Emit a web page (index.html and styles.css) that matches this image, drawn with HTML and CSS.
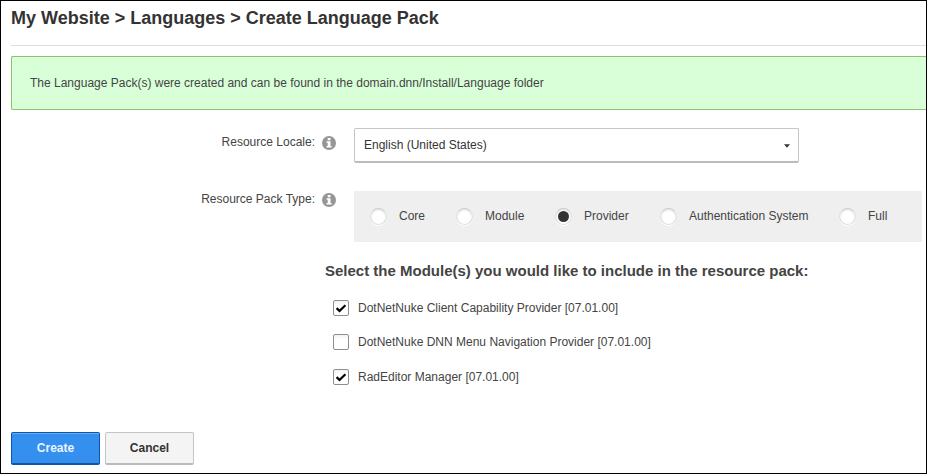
FILE: index.html
```html
<!DOCTYPE html>
<html lang="en">
<head>
<meta charset="utf-8">
<title>Create Language Pack</title>
<link rel="stylesheet" href="styles.css">
</head>
<body>
<svg width="0" height="0" class="defs" aria-hidden="true">
  <symbol id="info" viewBox="0 0 14 14"><circle cx="7" cy="7" r="7" fill="#969696"/><path d="M5.7 2h2.8v2.2H5.7zM4.6 5.3h3.9v4.6h1.1v1.5H4.5V9.9h1.2V6.8H4.6z" fill="#fff"/></symbol>
  <symbol id="tick" viewBox="0 0 14 14"><path d="M2.6 7.2L5.5 10L11.4 4.2" fill="none" stroke="#000" stroke-width="2.3"/></symbol>
</svg>
<main class="page">
  <h1 class="title">My Website &gt; Languages &gt; Create Language Pack</h1>
  <div class="alert">The Language Pack(s) were created and can be found in the domain.dnn/Install/Language folder</div>
  <form class="form">
    <div class="row row-locale">
      <div class="label"><span>Resource Locale:</span><svg class="info"><use href="#info"/></svg></div>
      <div class="select"><span>English (United States)</span><svg class="caret" viewBox="0 0 6 4"><path d="M0 .3h6L3 3.7z" fill="#333"/></svg></div>
    </div>
    <div class="row row-type">
      <div class="label"><span>Resource Pack Type:</span><svg class="info"><use href="#info"/></svg></div>
      <div class="radios">
        <label class="option core"><i class="radio"></i><span>Core</span></label>
        <label class="option module"><i class="radio"></i><span>Module</span></label>
        <label class="option provider"><i class="radio on"></i><span>Provider</span></label>
        <label class="option auth"><i class="radio"></i><span>Authentication System</span></label>
        <label class="option"><i class="radio"></i><span>Full</span></label>
      </div>
    </div>
    <h2 class="subtitle">Select the Module(s) you would like to include in the resource pack:</h2>
    <div class="checks">
      <label class="check"><svg class="box"><use href="#tick"/></svg>DotNetNuke Client Capability Provider [07.01.00]</label>
      <label class="check"><svg class="box"></svg>DotNetNuke DNN Menu Navigation Provider [07.01.00]</label>
      <label class="check"><svg class="box"><use href="#tick"/></svg>RadEditor Manager [07.01.00]</label>
    </div>
    <div class="actions">
      <button type="button" class="btn primary">Create</button>
      <button type="button" class="btn">Cancel</button>
    </div>
  </form>
</main>
</body>
</html>
```
FILE: styles.css
```css
* { box-sizing: border-box; }
body { margin: 0; background: #fff; color: #444; font: 12px/18px "Liberation Sans", Arial, sans-serif; }
.defs { display: none; }
.page { height: 474px; border: 1px solid #000; padding-left: 10px; overflow: hidden; }
.title { margin: 0 0 10px; height: 45px; padding-top: 6px; border-bottom: 1px solid #ddd; color: #333; font-size: 18px; line-height: 22px; }
.alert { height: 54px; padding: 17px 18px; border: 1px solid #8fc26c; border-right: 0; border-radius: 2px 0 0 2px; background: #d9ffd9; }
.row { display: flex; }
.row-locale { margin-top: 18px; height: 35px; }
.row-type { margin-top: 28px; height: 51px; }
.label { display: flex; justify-content: flex-end; width: 325px; margin-right: 18px; gap: 7px; padding-top: 5px; }
.row-type .label { padding-top: 0; line-height: 16px; }
.info { width: 14px; height: 14px; margin-top: 3px; }
.row-type .info { margin-top: 2px; }
.select { display: flex; align-items: center; justify-content: space-between; width: 445px; height: 35px; padding: 0 8px 1px 9px; border: 1px solid #c5c5c5; border-bottom: 2px solid #bbb; border-radius: 2px; color: #333; }
.caret { width: 6px; height: 4px; margin-top: 3px; }
.radios { display: flex; align-items: center; width: 568px; padding-left: 16px; background: #efefef; }
.option { display: flex; align-items: center; height: 20px; gap: 12px; }
.option span { padding-bottom: 2px; }
.core { width: 86px; }
.module { width: 99px; }
.provider { width: 105px; }
.auth { width: 179px; }
.radio { display: flex; align-items: center; justify-content: center; width: 17px; height: 17px; border: 1px solid #ddd; border-top-color: #ccc; border-radius: 50%; background: #fff; box-shadow: inset 0 1px 2px #ddd, 0 1px #fff; }
.on::after { content: ""; width: 11px; height: 11px; border-radius: 50%; background: #333; }
.subtitle { margin: 19px 0 0 314px; font-size: 15px; line-height: 20px; }
.checks { display: flex; flex-direction: column; margin: 18px 0 0 322px; gap: 16.4px; }
.check { display: flex; align-items: center; height: 18px; gap: 9px; }
.box { width: 16px; height: 16px; border: 1px solid #8e8e8e; border-radius: 2px; background: linear-gradient(#f3f3f3, #fff 35%); }
.actions { display: flex; gap: 5px; margin-top: 46px; }
.btn { width: 89px; height: 33px; padding: 0; border: 1px solid #c4c4c4; border-bottom: 2px solid #bbb; border-radius: 2px; background: #f4f4f4; color: #333; font: bold 12px/18px "Liberation Sans", Arial, sans-serif; }
.primary { border-color: #0d57a8; background: #358fee; color: #e9f4ff; box-shadow: inset 0 1px #65adf5; }
```
